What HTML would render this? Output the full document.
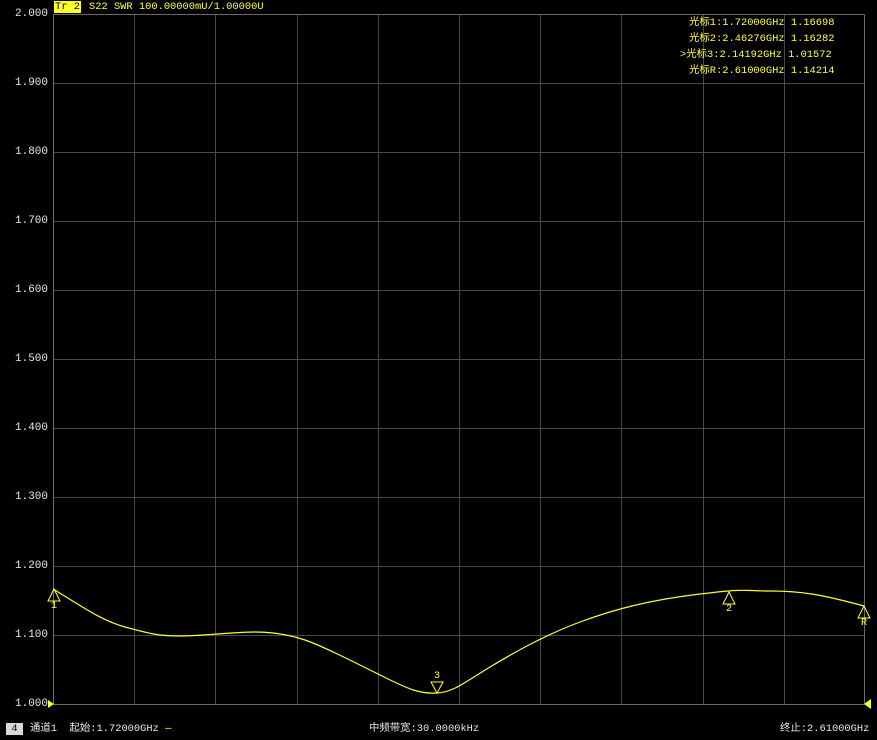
<html><head><style>
body{margin:0;width:877px;height:740px;background:#000;overflow:hidden;position:relative;font-family:"Liberation Mono","Noto Sans CJK SC",monospace;}
.t{position:absolute;font-size:11px;white-space:pre;line-height:12px}
.s{font-size:10.4px}
.w{color:#e8e8e8}.y{color:#ffff40}
</style></head><body>
<svg width="877" height="740" style="position:absolute;left:0;top:0">
<g stroke="#484848" stroke-width="1">
<line x1="134.5" y1="14" x2="134.5" y2="704"/><line x1="215.5" y1="14" x2="215.5" y2="704"/><line x1="297.5" y1="14" x2="297.5" y2="704"/><line x1="378.5" y1="14" x2="378.5" y2="704"/><line x1="459.5" y1="14" x2="459.5" y2="704"/><line x1="540.5" y1="14" x2="540.5" y2="704"/><line x1="621.5" y1="14" x2="621.5" y2="704"/><line x1="703.5" y1="14" x2="703.5" y2="704"/><line x1="784.5" y1="14" x2="784.5" y2="704"/>
<line x1="53" y1="83.5" x2="864" y2="83.5"/><line x1="53" y1="152.5" x2="864" y2="152.5"/><line x1="53" y1="221.5" x2="864" y2="221.5"/><line x1="53" y1="290.5" x2="864" y2="290.5"/><line x1="53" y1="359.5" x2="864" y2="359.5"/><line x1="53" y1="428.5" x2="864" y2="428.5"/><line x1="53" y1="497.5" x2="864" y2="497.5"/><line x1="53" y1="566.5" x2="864" y2="566.5"/><line x1="53" y1="635.5" x2="864" y2="635.5"/>
</g>
<rect x="53.5" y="14.5" width="811" height="690" fill="none" stroke="#6a6a6a"/>
<path d="M53 589 C80 605,100 620,125 627 S160 636,180 636 S235 632,255 632 S290 635,305 640 S350 660,380 675 S420 694,437 693 S465 682,490 667 S545 635,580 622 S650 600,700 594 S740 591,770 591 S820 594,864 606" fill="none" stroke="#ffff30" stroke-width="1.2"/>
<g fill="none" stroke="#ffff30" stroke-width="1">
<path d="M54 589 L48 601 L60 601 Z"/>
<path d="M729 592 L723 604 L735 604 Z"/>
<path d="M864 606 L858 618 L870 618 Z"/>
<path d="M437 693 L431 682 L443 682 Z"/>
</g>
<path d="M48 700 L54 704 L48 708 Z" fill="#ffff30"/>
<path d="M871 699 L864 704 L871 709 Z" fill="#ffff30"/>
</svg>
<div class="t y" style="left:51px;top:601px;font-size:10px">1</div>
<div class="t y" style="left:726px;top:604px;font-size:10px">2</div>
<div class="t y" style="left:861px;top:618px;font-size:10px">R</div>
<div class="t y" style="left:434px;top:671px;font-size:10px">3</div>
<div class="t s" style="left:54px;top:1px;background:#ffff30;color:#000;padding:0 1px">Tr 2</div>
<div class="t y s" style="left:89px;top:1px">S22 SWR 100.00000mU/1.00000U</div>
<div class="t w" style="left:15px;top:8px">2.000</div>
<div class="t w" style="left:15px;top:77px">1.900</div>
<div class="t w" style="left:15px;top:146px">1.800</div>
<div class="t w" style="left:15px;top:215px">1.700</div>
<div class="t w" style="left:15px;top:284px">1.600</div>
<div class="t w" style="left:15px;top:353px">1.500</div>
<div class="t w" style="left:15px;top:422px">1.400</div>
<div class="t w" style="left:15px;top:491px">1.300</div>
<div class="t w" style="left:15px;top:560px">1.200</div>
<div class="t w" style="left:15px;top:629px">1.100</div>
<div class="t w" style="left:15px;top:698px">1.000</div>
<div class="t y s" style="left:689px;top:17px">光标1:1.72000GHz 1.16698</div>
<div class="t y s" style="left:689px;top:33px">光标2:2.46276GHz 1.16282</div>
<div class="t y s" style="left:680px;top:49px">&gt;光标3:2.14192GHz 1.01572</div>
<div class="t y s" style="left:689px;top:65px">光标R:2.61000GHz 1.14214</div>
<div class="t s" style="left:6px;top:723px;background:#d8d8d8;color:#000;width:17px;text-align:center">4</div>
<div class="t w s" style="left:30px;top:723px">通道1  起始:1.72000GHz <span class="y">—</span></div>
<div class="t w s" style="left:369px;top:723px">中频带宽:30.0000kHz</div>
<div class="t w s" style="left:780px;top:723px">终止:2.61000GHz</div>
</body></html>
